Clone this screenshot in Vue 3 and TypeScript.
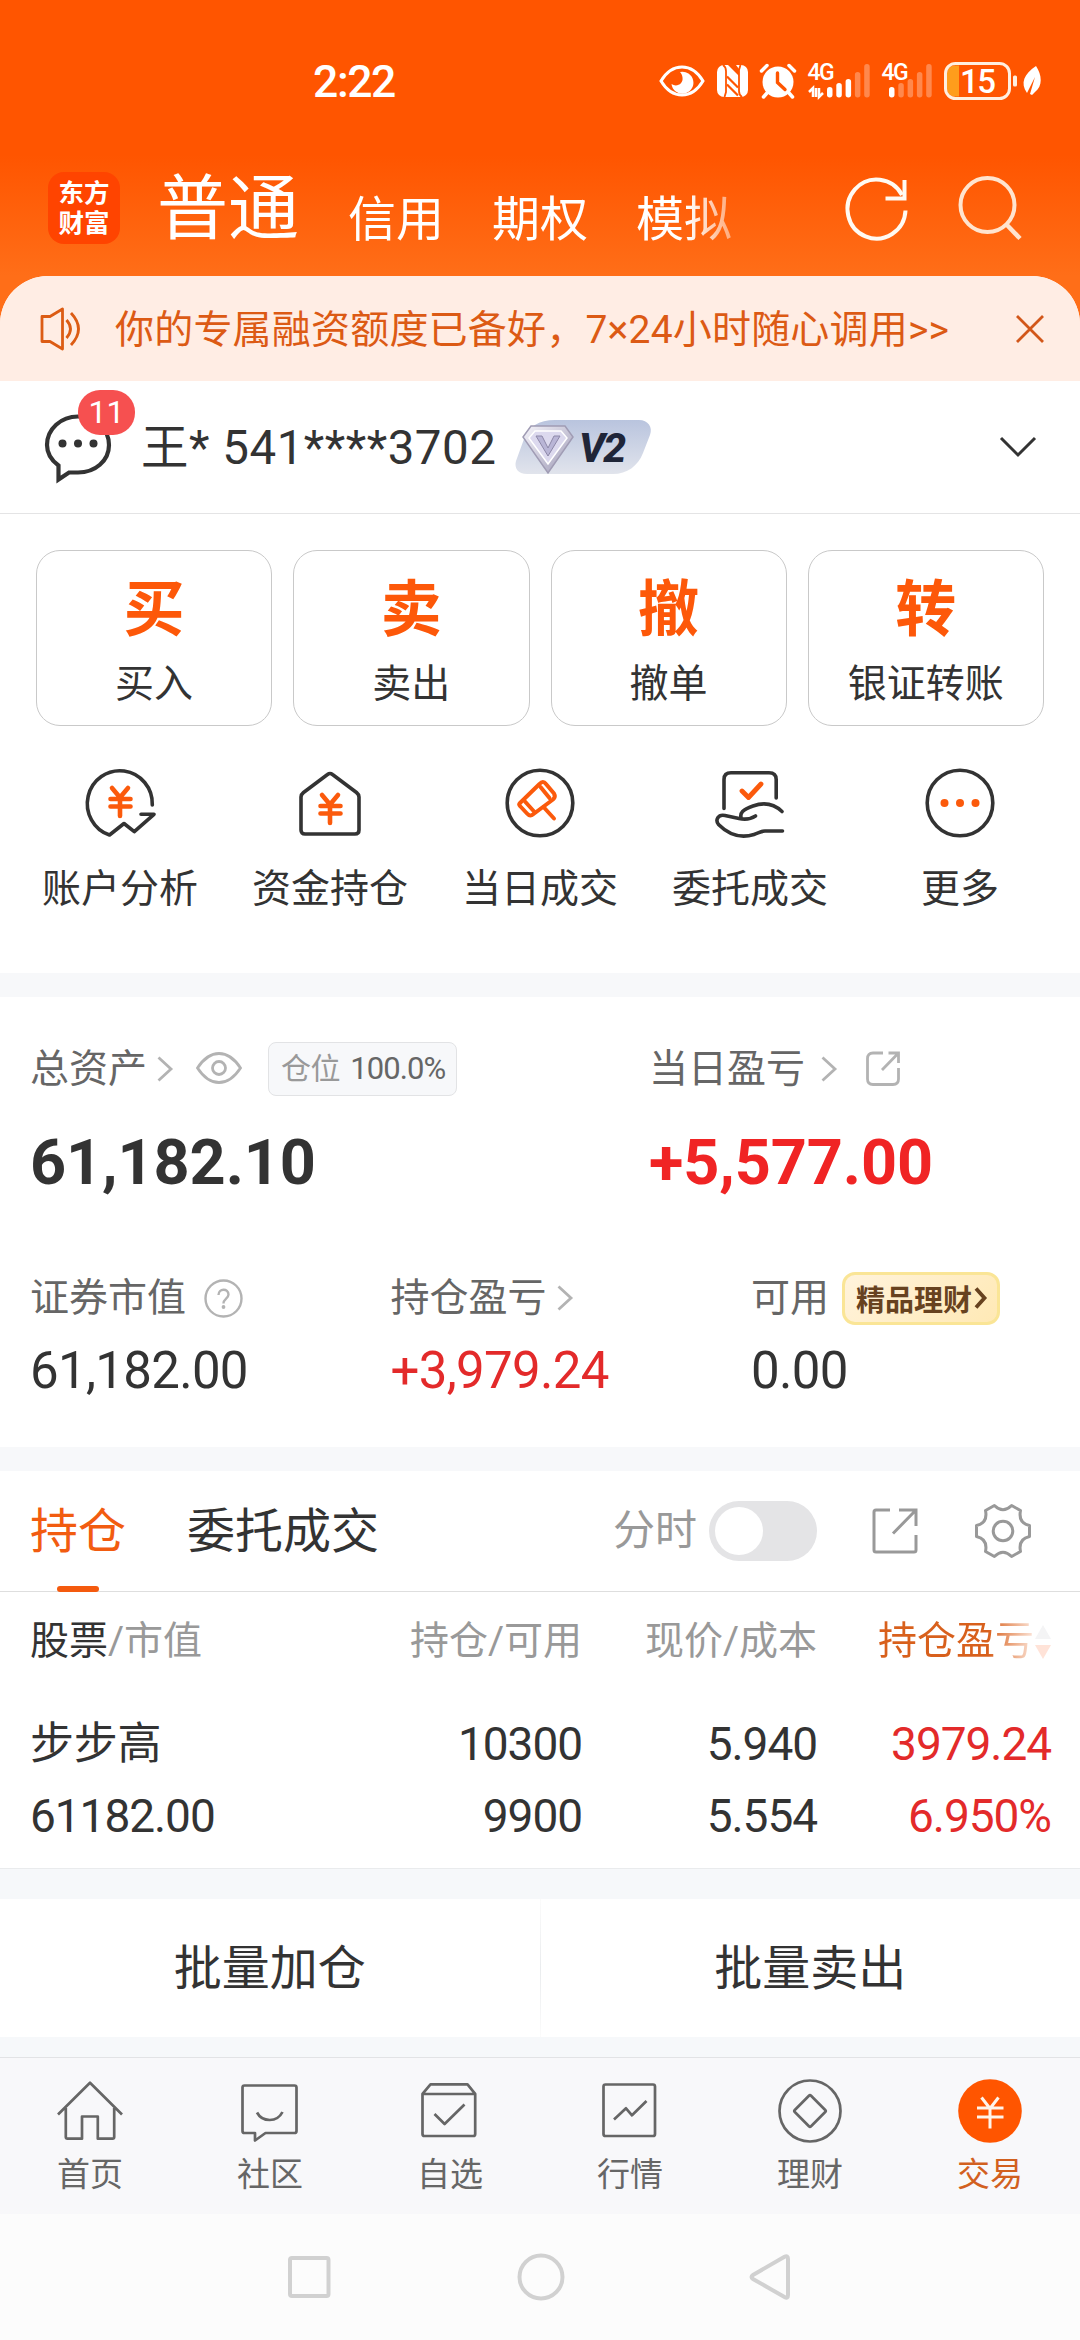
<script setup lang="ts">
interface Action { glyph: string; label: string }
interface Bar { x: number; top: number; on: boolean }

const accountTabs: string[] = ['信用', '期权', '模拟']

const actions: Action[] = [
  { glyph: '买', label: '买入' },
  { glyph: '卖', label: '卖出' },
  { glyph: '撤', label: '撤单' },
  { glyph: '转', label: '银证转账' },
]

const shortcuts: string[] = ['账户分析', '资金持仓', '当日成交', '委托成交', '更多']
const navItems: string[] = ['首页', '社区', '自选', '行情', '理财', '交易']

const barTops: number[] = [24, 20, 16, 9, 1]
function makeBars(start: number, step: number, active: number): Bar[] {
  return barTops.map((top, i) => ({ x: start + i * step, top, on: i < active }))
}
const signalOne = makeBars(19, 9.3, 3)
const signalTwo = makeBars(7, 9.3, 1)
</script>

<template>
  <div class="phone">
    <div class="status">
      <span class="time">2:22</span>
      <div class="status-icons">
        <svg width="46" height="34" viewBox="0 0 46 34">
          <path d="M2 17C8 7 15 3 23 3s15 4 21 14C38 27 31 31 23 31S8 27 2 17Z" fill="none" stroke="#fff" stroke-width="3" />
          <path d="M21 8a11 11 0 1 1-8.500 12c5 3.500 12 0 11-6.500C23.200 11 22.500 9.500 21 8Z" fill="#fff" />
        </svg>
        <svg width="31" height="34" viewBox="0 0 31 34">
          <rect x="0" y="1" width="31" height="32" rx="7" fill="#fff" />
          <path d="M6 1Q9 3 9 7V28L7.500 33M25 33Q22 31 22 27V6L23.500 1" fill="none" stroke="#ff5500" stroke-width="1.800" />
          <path d="M11 1H19L22 5V12Z" fill="#ff5500" />
          <path d="M10 12.500 21 23.500M10 20.500 21 31.500" fill="none" stroke="#ff5500" stroke-width="2.200" />
        </svg>
        <svg width="36" height="36" viewBox="0 0 36 36">
          <circle cx="18" cy="19" r="15.500" fill="#fff" />
          <path d="M1.500 8 7 2.500M34.500 8 29 2.500M7 30l-3.500 4M29 30l3.500 4" stroke="#fff" stroke-width="3.500" stroke-linecap="round" />
          <path d="M17.500 10v9.500l7.500 7" fill="none" stroke="#ff5500" stroke-width="3.400" stroke-linecap="round" />
        </svg>
        <svg width="62" height="36" viewBox="0 0 62 36">
          <text x="-0.500" y="17" class="net">4G</text>
          <path d="M1 29l4-4v9M8 25v9M11 25v9l4-4" fill="none" stroke="#fff" stroke-width="2.500" />
          <rect v-for="b in signalOne" :key="b.x" :x="b.x" :y="b.top" width="5.500" :height="34.500 - b.top" rx="2.700" fill="#fff" :opacity="b.on ? 1 : 0.3" />
        </svg>
        <svg width="50" height="36" viewBox="0 0 50 36">
          <text x="-0.500" y="17" class="net">4G</text>
          <rect v-for="b in signalTwo" :key="b.x" :x="b.x" :y="b.top" width="5.500" :height="34.500 - b.top" rx="2.700" fill="#fff" :opacity="b.on ? 1 : 0.3" />
        </svg>
        <svg width="98" height="38" viewBox="0 0 98 38">
          <path d="M15 3.500h-4A8 8 0 0 0 3 11.500v15a8 8 0 0 0 8 8h4Z" fill="#ff9d1c" />
          <rect x="1.500" y="1.500" width="64" height="35" rx="10" fill="none" stroke="#ffefe0" stroke-width="3" />
          <text x="16" y="30.500" class="battery">15</text>
          <rect x="69" y="13.500" width="4" height="11" rx="1.500" fill="#ffefe0" />
          <path d="M92 4c6 9 7 20-1 26l-3 3-2-1 5-17-8 16c-7-10-3-19 9-27Z" fill="#fff" />
        </svg>
      </div>
    </div>

    <header class="top">
      <div class="logo"><span>东方</span><span>财富</span></div>
      <div class="tabs">
        <span class="tab-main">普通</span>
        <span v-for="t in accountTabs" :key="t" class="tab">{{ t }}</span>
      </div>
      <svg class="refresh" width="64" height="64" viewBox="0 0 64 64">
        <path d="M60.500 33.500A29 29.500 0 1 1 57 18" fill="none" stroke="#fffaf2" stroke-width="4" />
        <path d="M59.500 3v18.500H40.500" fill="none" stroke="#fffaf2" stroke-width="4" />
      </svg>
      <svg class="search" width="64" height="66" viewBox="0 0 64 66">
        <circle cx="29.500" cy="30" r="27" fill="none" stroke="#ffe4cf" stroke-width="4" />
        <path d="M48.500 49.500 62 63.500" stroke="#ffe4cf" stroke-width="4.500" />
      </svg>
    </header>

    <main class="sheet">
      <div class="notice">
        <svg width="44" height="44" viewBox="0 0 44 44" fill="none" stroke="#dc5c14" stroke-width="2.800">
          <path d="M3 9.500h8L23.500 2v40L11 34.500H3Z" stroke-linejoin="round" />
          <path d="M27.500 13q8 9 0 18M32 6q15 16 0 32" />
        </svg>
        <span class="notice-text">你的专属融资额度已备好，7×24小时随心调用&gt;&gt;</span>
        <svg width="28" height="28" viewBox="0 0 28 28"><path d="M1 1l26 26M27 1 1 27" stroke="#d2571a" stroke-width="2.800" /></svg>
      </div>

      <div class="account">
        <div class="chat">
          <svg width="68" height="70" viewBox="0 0 68 70">
            <path d="M14.500 53.500C7 48 3 41 3 33 3 17 17 4.500 34 4.500S65 17 65 33 51 60.500 34 60.500H25L14.500 67.500Z" fill="none" stroke="#333" stroke-width="4.200" />
            <circle cx="18.500" cy="31.500" r="4" fill="#333" /><circle cx="34" cy="31.500" r="4" fill="#333" /><circle cx="49.500" cy="31.500" r="4" fill="#333" />
          </svg>
          <span class="count">11</span>
        </div>
        <span class="holder">王* 541****3702</span>
        <div class="vip">
          <svg width="136" height="56" viewBox="0 0 136 56">
            <defs>
              <linearGradient id="vipBg" x1="0" y1="0" x2="0" y2="1"><stop offset="0" stop-color="#b9c4de" /><stop offset="1" stop-color="#e1e4ec" /></linearGradient>
              <linearGradient id="gem" x1="0" y1="0" x2="1" y2="1"><stop offset="0" stop-color="#f6f5fb" /><stop offset="1" stop-color="#9d99b5" /></linearGradient>
            </defs>
            <path d="M40 1H124c9 0 14 7 11 15l-7 18c-5 13-16 21-30 21H12C3 55-1 49 1 42L9 20C13 8 24 1 40 1Z" fill="url(#vipBg)" />
            <path d="M16 7H50L58 18 33 54 8 18Z" fill="url(#gem)" stroke="#a09cb4" stroke-width="1.500" />
            <path d="M20 12H46L52 19 33 45 14 19Z" fill="#dcd9ee" stroke="#fff" stroke-width="1.500" />
            <path d="M21 17h6l6 12 6-12h6L33 37Z" fill="#b9b5d6" stroke="#8d88a8" stroke-width="1" />
          </svg>
          <span class="level">V2</span>
        </div>
        <svg class="expand" width="38" height="22" viewBox="0 0 38 22"><path d="M2 2l17 17L36 2" fill="none" stroke="#333" stroke-width="3" /></svg>
      </div>

      <div class="actions">
        <div v-for="a in actions" :key="a.label" class="action">
          <span class="glyph">{{ a.glyph }}</span>
          <span class="action-label">{{ a.label }}</span>
        </div>
      </div>

      <div class="shortcuts">
        <div v-for="(s, i) in shortcuts" :key="s" class="shortcut">
          <svg width="70" height="70" viewBox="0 0 70 70" fill="none" stroke="#333" stroke-width="3.600" stroke-linecap="round" stroke-linejoin="round">
            <template v-if="i === 0">
              <path d="M67.300 37A32.500 33 0 1 0 24.500 67L39 55.500 49.300 63.700 69 46.300H56" />
              <path d="M27 20l8 9.500 8-9.500M25.500 31H45.500M25.500 38.500H45.500M35 30V48" stroke="#fb5a0c" stroke-width="4.600" />
            </template>
            <template v-else-if="i === 1">
              <path d="M32.500 6.500Q35 4.500 37.500 6.500L61.500 24.500Q64 26.500 64 29V62Q64 66 60 66H10Q6 66 6 62V29Q6 26.500 8.500 24.500Z" />
              <path d="M27 27l8 9.500 8-9.500M25.500 38H45.500M25.500 45.500H45.500M35 37V55" stroke="#fb5a0c" stroke-width="4.600" />
            </template>
            <template v-else-if="i === 2">
              <circle cx="35" cy="35" r="32.800" />
              <g stroke="#fb5a0c" stroke-width="4">
                <path d="M15 35 34.500 16Q38 12 41 16L49 25.500Q51 29 48 31.500L28.500 46Q25 49 22 45.500L15 38Q13.500 36.500 15 35Z" />
                <path d="M20 33.500 29.500 44M35.500 19 44.500 30M38.500 39 49 50.500" />
              </g>
            </template>
            <template v-else-if="i === 3">
              <path d="M9 40.500V11.500Q9 4.700 16 4.700H54Q61.200 4.700 61.200 11.500V30" />
              <path d="M27 23l6.500 6.500L46 16" stroke="#fb5a0c" stroke-width="4.800" />
              <path d="M67 43.500C58 35 49 34 38 38 28 41.500 24 45 26.500 51M40.500 48C36 51 31 52 24 50.500L10 47.500C3 46 0 52 3.500 56.500 14 67 26 70.500 39 66.500 44 65 46 63 50 63H67.500" />
            </template>
            <template v-else>
              <circle cx="35" cy="35" r="32.800" />
              <g fill="#fb5a0c" stroke="none"><circle cx="19.500" cy="35" r="4" /><circle cx="35" cy="35" r="4" /><circle cx="50.500" cy="35" r="4" /></g>
            </template>
          </svg>
          <span>{{ s }}</span>
        </div>
      </div>

      <div class="band" />

      <section class="assets">
        <div class="row">
          <div class="cell total">
            <span class="caption">总资产</span>
            <svg class="chev" width="16" height="26" viewBox="0 0 16 26"><path d="M1.500 1.500 14 13 1.500 24.500" /></svg>
            <svg class="eye" width="46" height="32" viewBox="0 0 46 32" fill="none" stroke="#b3b3b3" stroke-width="2.800">
              <path d="M1.500 16C8 6 15 1.500 23 1.500S38 6 44.500 16C38 26 31 30.500 23 30.500S8 26 1.500 16Z" /><circle cx="23" cy="16" r="6.500" />
            </svg>
            <span class="position"><i>仓位</i>100.0%</span>
          </div>
          <div class="cell">
            <span class="caption">当日盈亏</span>
            <svg class="chev far" width="16" height="26" viewBox="0 0 16 26"><path d="M1.500 1.500 14 13 1.500 24.500" /></svg>
            <svg class="share" width="34" height="36" viewBox="0 0 34 36" fill="none" stroke="#b3b3b3" stroke-width="2.800">
              <path d="M17 2H7Q1.500 2 1.500 7.500V28Q1.500 33.500 7 33.500H27Q32.500 33.500 32.500 28V17" /><path d="M22.500 2H32.500V12M32 2.500 16 19" />
            </svg>
          </div>
        </div>
        <div class="row big">
          <span class="total">61,182.10</span>
          <span class="up">+5,577.00</span>
        </div>
        <div class="row thirds">
          <div class="cell">
            <span class="caption">证券市值</span>
            <svg class="help" width="39" height="39" viewBox="0 0 39 39">
              <circle cx="19.500" cy="19.500" r="18" fill="none" stroke="#b3b3b3" stroke-width="2.400" />
              <path d="M14.500 16c0-7 10-7 10-.5 0 4-5 4.500-5 9" fill="none" stroke="#b3b3b3" stroke-width="2.400" /><circle cx="19.500" cy="28" r="1.900" fill="#b3b3b3" />
            </svg>
          </div>
          <div class="cell">
            <span class="caption">持仓盈亏</span>
            <svg class="chev" width="16" height="26" viewBox="0 0 16 26"><path d="M1.500 1.500 14 13 1.500 24.500" /></svg>
          </div>
          <div class="cell">
            <span class="caption">可用</span>
            <span class="promo">精品理财<svg width="13" height="22" viewBox="0 0 13 22"><path d="M2 1.500 10.500 11 2 20.500" fill="none" stroke="#67421f" stroke-width="3.800" /></svg></span>
          </div>
        </div>
        <div class="row thirds values">
          <span>61,182.00</span>
          <span class="up">+3,979.24</span>
          <span>0.00</span>
        </div>
      </section>

      <div class="band" />

      <div class="hold-tabs">
        <span class="hold-tab active">持仓</span>
        <span class="hold-tab">委托成交</span>
        <span class="minute">分时</span>
        <span class="toggle" />
        <svg class="export" width="46" height="46" viewBox="0 0 46 46" fill="none" stroke="#999" stroke-width="3">
          <path d="M18 2H4Q2 2 2 4V42Q2 44 4 44H42Q44 44 44 42V27" /><path d="M27 2H44V18M43.500 2.500 21 25.500" />
        </svg>
        <svg class="gear" width="56" height="56" viewBox="-28 -28 56 56" fill="none" stroke="#999" stroke-width="3" stroke-linejoin="round">
          <path d="M-8.600-25.500Q0-17 8.600-25.500L17.500-20.500Q15-8 26.500-5.500V5.500Q15 8 17.500 20.500L8.600 25.500Q0 17-8.600 25.500L-17.500 20.500Q-15 8-26.500 5.500V-5.500Q-15-8-17.500-20.500Z" />
          <circle r="9.800" />
        </svg>
      </div>

      <div class="grid head">
        <span><b>股票</b>/市值</span>
        <span>持仓/可用</span>
        <span>现价/成本</span>
        <span class="sort"><em>持仓盈亏</em>
          <svg width="16" height="34" viewBox="0 0 16 34"><path d="M8 0 16 14H0Z" fill="#f4f4f5" /><path d="M0 20H16L8 34Z" fill="#ffe3d8" /></svg>
        </span>
      </div>
      <div class="grid stock">
        <span class="name">步步高</span><span>10300</span><span>5.940</span><span class="up">3979.24</span>
        <span>61182.00</span><span>9900</span><span>5.554</span><span class="up">6.950%</span>
      </div>

      <div class="band lower" />
      <div class="batch"><span>批量加仓</span><i /><span>批量卖出</span></div>
      <div class="band thin" />
    </main>

    <nav class="nav">
      <div v-for="(n, i) in navItems" :key="n" class="nav-item" :class="{ current: i === 5 }">
        <svg width="66" height="66" viewBox="0 0 66 66" fill="none" stroke="#666" stroke-width="2.700" stroke-linejoin="round">
          <path v-if="i === 0" d="M1 36.500 33 4.700 65 36.500M8.800 30V59Q8.800 60.700 10.500 60.700H25V38.500H40.800V60.700H55.500Q57.200 60.700 57.200 59V30" />
          <template v-else-if="i === 1">
            <path d="M7.500 7.500H57.500Q59.500 7.500 59.500 9.500V53Q59.500 55 57.500 55H28.500L18 62.500V55H7.500Q5.500 55 5.500 53V9.500Q5.500 7.500 7.500 7.500Z" />
            <path d="M20 34.500Q24 42 32.700 42T45.500 34" />
          </template>
          <template v-else-if="i === 2">
            <path d="M13.500 6.300H50.500L58.200 15.800V56Q58.200 58 56.200 58H7.500Q5.500 58 5.500 56V15.800ZM5.500 16H58.200" />
            <path d="M17.500 36 27.600 46 47.500 26.500" />
          </template>
          <template v-else-if="i === 3">
            <rect x="6.500" y="6.500" width="51.500" height="51.500" rx="2" /><path d="M17 41.500 29 30.300 35 37.300 49.500 23" />
          </template>
          <template v-else-if="i === 4">
            <circle cx="33" cy="33" r="30.500" />
            <rect x="21.500" y="21.500" width="23" height="23" rx="1.500" transform="rotate(45 33 33)" />
          </template>
          <template v-else>
            <circle cx="33" cy="33" r="31.800" fill="#ff5500" stroke="none" />
            <path d="M24.500 19.500 33 30.500 41.500 19.500M20 30H46.500M20 39H46.500M33 30V50.500" stroke="#fff4ea" stroke-width="3" />
          </template>
        </svg>
        <span>{{ n }}</span>
      </div>
    </nav>

    <div class="system">
      <svg width="46" height="50" viewBox="0 0 46 50"><rect x="2" y="6" width="38.500" height="38" rx="2" /></svg>
      <svg width="48" height="50" viewBox="0 0 48 50"><circle cx="24" cy="25" r="21.500" /></svg>
      <svg width="44" height="50" viewBox="0 0 44 50"><path d="M36.500 4.800Q40 3 40 7V43Q40 47 36.500 45L5 27Q2 25 5 23Z" /></svg>
    </div>
  </div>
</template>

<style>
body { background: #fcfcfc; }
</style>

<style scoped>
.phone { width: 1080px; height: 2340px; overflow: hidden; background: linear-gradient(#ff5500 0, #ff5500 155px, #ff6e18 276px, #ff6e18 400px, #fcfcfc 400px); font-family: Roboto, "Noto Sans CJK SC", sans-serif; color: #333; white-space: nowrap; }
.phone * { box-sizing: border-box; }
svg { display: block; flex: none; overflow: visible; }

.status { height: 162px; display: flex; align-items: center; padding-left: 313px; color: #fff; }
.time { width: 346px; margin-top: 2px; font-size: 44.500px; font-weight: 500; line-height: 60px; letter-spacing: -1.400px; }
.status-icons { display: flex; align-items: center; gap: 12px; }
.net { font: 500 23px Roboto, sans-serif; fill: #fff; letter-spacing: -1.5px; }
.battery { font: 500 33px Roboto, sans-serif; fill: #fff; letter-spacing: -1.5px; }

.top { height: 114px; display: flex; align-items: center; padding-left: 48px; color: #fff; }
.logo { width: 72px; height: 72px; margin-bottom: 22px; border-radius: 16px; background: #ff4400; display: flex; flex-direction: column; align-items: center; justify-content: center; }
.logo span { font-size: 25.500px; font-weight: 700; line-height: 30px; }
.tabs { width: 688px; margin-left: 37px; display: flex; align-items: center; -webkit-mask-image: linear-gradient(90deg, #000 530px, rgba(0, 0, 0, .25) 590px); mask-image: linear-gradient(90deg, #000 530px, rgba(0, 0, 0, .25) 590px); }
.tab-main { font-size: 71px; line-height: 80px; margin-bottom: 20px; margin-right: 1px; }
.tab { font-size: 48px; line-height: 60px; margin-left: 48px; margin-top: 1px; }
.refresh { margin-bottom: 20px; }
.search { margin: 0 0 22px 49px; }

.sheet { border-radius: 48px 48px 0 0; background: #fff; overflow: hidden; }
.notice { height: 105px; background: #ffede4; display: flex; align-items: center; padding: 0 36px 0 39px; color: #dc5a14; }
.notice-text { flex: 1; margin-left: 32px; margin-top: 2px; font-size: 39px; line-height: 54px; letter-spacing: .2px; }

.account { height: 133px; border-bottom: 1px solid #e4e4e5; display: flex; align-items: center; padding: 0 43px 0 44px; }
.chat { position: relative; width: 97px; }
.count { position: absolute; left: 34px; top: -22px; width: 57px; height: 45px; border-radius: 22px; background: #f65050; color: #fff; font-size: 32px; line-height: 45px; text-align: center; }
.holder { font-size: 47.500px; line-height: 60px; width: 374px; margin-top: 2px; letter-spacing: .5px; }
.vip { position: relative; width: 136px; height: 56px; }
.level { position: absolute; left: 64px; top: 8px; font-size: 41px; line-height: 42px; font-weight: 800; font-style: italic; color: #1f2538; letter-spacing: -2px; }
.expand { margin-left: auto; }

.actions { display: flex; gap: 21px; padding: 36px 36px 0; }
.action { flex: 1; height: 176px; border: 1px solid #c9c9c9; border-radius: 24px; display: flex; flex-direction: column; align-items: center; padding-top: 19px; }
.glyph { font-size: 61px; font-weight: 700; line-height: 80px; color: #fd5809; }
.action-label { font-size: 39px; line-height: 54px; margin-top: 7px; }

.shortcuts { height: 247px; display: flex; padding: 42px 15px 0; }
.shortcut { width: 210px; display: flex; flex-direction: column; align-items: center; }
.shortcut span { margin-top: 24px; font-size: 39px; line-height: 54px; }

.band { height: 24px; background: #f7f8fa; }
.lower { height: 31px; border-top: 1px solid #e9ebed; background: #f6f8fa; }
.thin { height: 20px; background: #f6f8fa; }

.assets { height: 450px; padding: 45px 30px 0; }
.row { display: flex; align-items: center; }
.cell { display: flex; align-items: center; height: 54px; }
.total { width: 619px; flex: none; }
.caption { font-size: 39px; line-height: 54px; color: #666; }
.chev { margin: 0 0 0 10px; fill: none; stroke: #b3b3b3; stroke-width: 2.8px; }
.far { margin-left: 16px; }
.eye { margin: 0 0 2px 23px; }
.position { margin-left: 26px; width: 189px; height: 54px; border: 1px solid #e2e3e5; border-radius: 8px; background: #f7f8fa; padding-left: 12px; font-size: 31px; line-height: 51px; color: #666; letter-spacing: -.9px; }
.position i { font-style: normal; font-size: 30px; color: #999; margin-right: 10px; letter-spacing: -.4px; }
.share { margin-left: 29px; }
.big { margin-top: 29px; font-size: 63px; font-weight: 700; line-height: 76px; letter-spacing: -.1px; }
.up { color: #e32a2a; }
.big .up { color: #f02424; }
.thirds { margin-top: 70px; }
.thirds > * { width: 360.500px; flex: none; }
.values { margin-top: 16px; font-size: 51px; line-height: 60px; letter-spacing: -.7px; }
.help { margin-left: 18px; }
.promo { margin-left: 13px; width: 158px; height: 53px; border: 3px solid #fae596; border-radius: 13px; background: linear-gradient(135deg, #fff3dc, #ffe9b5); display: flex; align-items: center; padding-left: 11px; font-size: 29px; font-weight: 700; color: #67421f; }
.promo svg { margin-left: 2px; }

.hold-tabs { height: 121px; border-bottom: 1px solid #dedede; display: flex; align-items: center; padding-left: 30px; }
.hold-tab { position: relative; top: 1px; font-size: 48px; line-height: 60px; margin-right: 61px; }
.active { color: #f25c10; }
.active::after { content: ""; position: absolute; left: 27px; bottom: -30px; width: 42px; height: 6px; border-radius: 3px; background: #f45a0e; }
.minute { margin-left: 173px; font-size: 42px; line-height: 60px; color: #999; }
.toggle { width: 108px; height: 60px; margin-left: 12px; border-radius: 30px; background: #e4e4e6; padding: 6px; }
.toggle::before { content: ""; display: block; width: 48px; height: 48px; border-radius: 50%; background: #fff; }
.export { margin-left: 55px; }
.gear { margin-left: 57px; }

.grid { display: grid; grid-template-columns: 271px 281px 235px 234px; padding: 0 29px 0 30px; }
.grid > :not(:nth-child(4n + 1)) { text-align: right; }
.head { height: 116px; font-size: 39px; line-height: 99px; color: #999; }
.head b { font-weight: 400; color: #333; }
.head .sort { display: flex; height: 99px; align-items: center; justify-content: flex-end; }
.sort em { font-style: normal; background: linear-gradient(90deg, #d8601c 110px, #fbe3d6 155px); -webkit-background-clip: text; background-clip: text; color: transparent; }
.sort svg { margin-left: 1px; }
.stock { height: 160px; font-size: 46px; line-height: 72px; grid-auto-rows: 72px; letter-spacing: -1.050px; }
.name { font-size: 44px; letter-spacing: -.3px; }

.batch { height: 138px; display: flex; align-items: center; }
.batch span { flex: 1; text-align: center; font-size: 48px; line-height: 60px; margin-top: 2px; }
.batch i { width: 1px; height: 138px; background: linear-gradient(#fbfbfb, #eaecee, #fbfbfb); }

.nav { height: 157px; border-top: 1px solid #e2e3e5; background: #f8f8fa; display: flex; padding-top: 20px; }
.nav-item { width: 180px; display: flex; flex-direction: column; align-items: center; color: #666; }
.nav-item span { margin-top: 9px; font-size: 33px; line-height: 44px; }
.current { color: #d2601f; }

.system { height: 126px; background: #fcfcfc; display: flex; align-items: center; justify-content: center; gap: 183px; }
.system svg { fill: none; stroke: #d1d1d1; stroke-width: 4px; }
</style>
